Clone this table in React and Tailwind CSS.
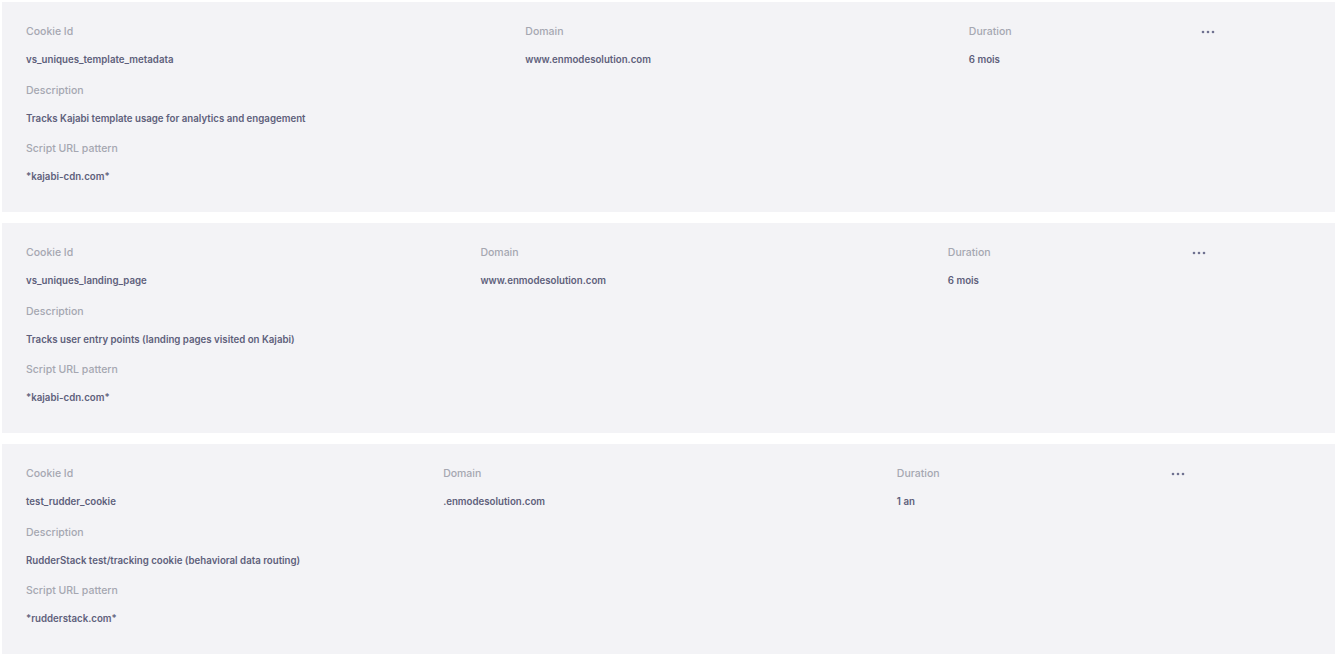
import React from 'react';

const cookies = [
  {
    id: 'vs_uniques_template_metadata',
    domain: 'www.enmodesolution.com',
    duration: '6 mois',
    description: 'Tracks Kajabi template usage for analytics and engagement',
    pattern: '*kajabi-cdn.com*',
  },
  {
    id: 'vs_uniques_landing_page',
    domain: 'www.enmodesolution.com',
    duration: '6 mois',
    description: 'Tracks user entry points (landing pages visited on Kajabi)',
    pattern: '*kajabi-cdn.com*',
  },
  {
    id: 'test_rudder_cookie',
    domain: '.enmodesolution.com',
    duration: '1 an',
    description: 'RudderStack test/tracking cookie (behavioral data routing)',
    pattern: '*rudderstack.com*',
  },
];

const Dots = () => (
  <svg width="14" height="4" viewBox="0 0 14 4" className="inline-block">
    <circle cx="2" cy="2" r="1.3" fill="#6f7190" />
    <circle cx="7" cy="2" r="1.3" fill="#6f7190" />
    <circle cx="12" cy="2" r="1.3" fill="#6f7190" />
  </svg>
);

const Label = ({ children }) => (
  <div className="text-[10.5px] leading-4 font-medium text-[#a5a7b1] whitespace-nowrap">{children}</div>
);

const Value = ({ children }) => (
  <div className="text-[9.7px] leading-4 font-semibold text-[#5e607b] whitespace-nowrap">{children}</div>
);

const CookieCard = ({ cookie }) => (
  <div className="bg-[#f3f3f6] pt-[22px] pb-[27px]">
    {/* ligne principale : colonnes auto comme un tableau */}
    <table className="w-full border-collapse">
      <tbody>
        <tr>
          <td className="px-6 align-top">
            <Label>Cookie Id</Label>
            <div className="mt-3"><Value>{cookie.id}</Value></div>
          </td>
          <td className="px-6 align-top">
            <Label>Domain</Label>
            <div className="mt-3"><Value>{cookie.domain}</Value></div>
          </td>
          <td className="px-6 align-top">
            <Label>Duration</Label>
            <div className="mt-3"><Value>{cookie.duration}</Value></div>
          </td>
          <td className="px-6 align-top">
            <div className="h-4 flex items-center"><Dots /></div>
          </td>
        </tr>
      </tbody>
    </table>

    <div className="px-6 flex flex-col">
      <div className="mt-[15px]"><Label>Description</Label></div>
      <div className="mt-3"><Value>{cookie.description}</Value></div>
      <div className="mt-[14px]"><Label>Script URL pattern</Label></div>
      <div className="mt-3"><Value>{cookie.pattern}</Value></div>
    </div>
  </div>
);

export default function App() {
  return (
    <div className="min-h-screen bg-white pl-[2px] pr-[4px] pt-[2px] font-['Inter',sans-serif]">
      <div className="flex flex-col gap-[11px]">
        {cookies.map((c) => (
          <CookieCard key={c.id} cookie={c} />
        ))}
      </div>
    </div>
  );
}
